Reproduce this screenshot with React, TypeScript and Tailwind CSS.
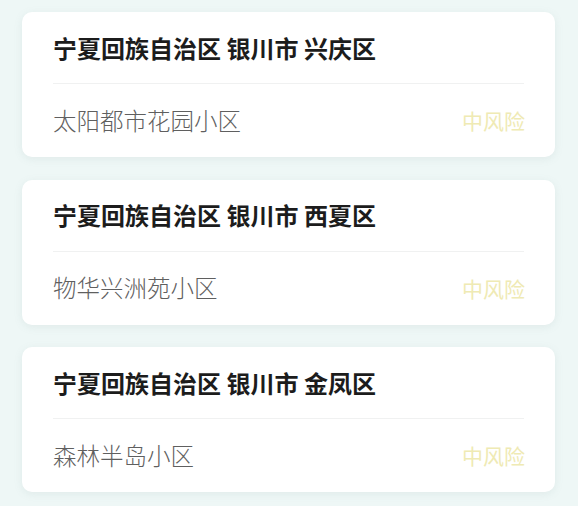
import React from "react";

type Area = {
  title: string;
  name: string;
  level: string;
};

const areas: Area[] = [
  { title: "宁夏回族自治区 银川市 兴庆区", name: "太阳都市花园小区", level: "中风险" },
  { title: "宁夏回族自治区 银川市 西夏区", name: "物华兴洲苑小区", level: "中风险" },
  { title: "宁夏回族自治区 银川市 金凤区", name: "森林半岛小区", level: "中风险" },
];

function AreaCard({ area }: { area: Area }) {
  return (
    <div className="flex h-[145px] w-[533px] flex-col rounded-[10px] bg-white px-[31px] shadow-[0_2px_8px_rgba(120,150,150,0.12)]">
      {/* region header */}
      <div className="flex h-[71px] items-center">
        <span className="text-[24px] font-bold leading-none text-[#1c1c1c]">{area.title}</span>
      </div>
      <div className="h-px bg-[#f0f1f1]" />
      <div className="flex flex-1 items-center justify-between">
        <span className="text-[23.5px] font-light leading-none text-[#5f5f5f]">{area.name}</span>
        <span className="mr-[-1px] text-[21px] leading-none text-[#efeab4]">{area.level}</span>
      </div>
    </div>
  );
}

export default function App() {
  return (
    <div
      className="flex min-h-[506px] w-[578px] flex-col gap-[22.5px] bg-[#eef7f6] px-[22px] pt-[12px]"
      style={{ fontFamily: '"Noto Sans CJK SC", "Noto Sans", sans-serif' }}
    >
      {areas.map((a) => (
        <AreaCard key={a.name} area={a} />
      ))}
    </div>
  );
}
